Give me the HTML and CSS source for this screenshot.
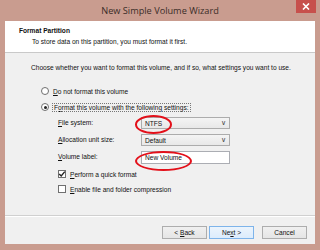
FILE: index.html
```html
<!DOCTYPE html>
<html lang="en">
<head>
    <meta charset="UTF-8">
    <title>New Simple Volume Wizard</title>
    <link rel="stylesheet" href="styles.css">
</head>
<body>

<div class="window">
    <div class="titlebar">
        <span class="title">New Simple Volume Wizard</span>
        <div class="close">
            <svg width="8" height="7" viewBox="0 0 8 7"><path d="M1 0.5 L7 6.5 M7 0.5 L1 6.5" stroke="#fff" stroke-width="1.6"/></svg>
        </div>
    </div>

    <div class="client">
        <div class="header">
            <div class="header-title">Format Partition</div>
            <div class="header-sub">To store data on this partition, you must format it first.</div>
        </div>

        <div class="content">
            <p class="intro">Choose whether you want to format this volume, and if so, what settings you want to use.</p>

            <div class="options">
                <div class="radio-row">
                    <span class="radio"></span>
                    <span><u>D</u>o not format this volume</span>
                </div>
                <div class="radio-row">
                    <span class="radio checked"></span>
                    <span class="focused">F<u>o</u>rmat this volume with the following settings:</span>
                </div>

                <div class="settings">
                    <label><u>F</u>ile system:</label>
                    <div class="combo">
                        <span>NTFS</span>
                        <span class="chevron">&#8744;</span>
                    </div>

                    <label><u>A</u>llocation unit size:</label>
                    <div class="combo">
                        <span>Default</span>
                        <span class="chevron">&#8744;</span>
                    </div>

                    <label><u>V</u>olume label:</label>
                    <div class="textbox">New Volume</div>
                </div>

                <div class="checks">
                    <div class="check-row">
                        <span class="checkbox checked">
                            <svg width="8" height="8" viewBox="0 0 8 8"><path d="M1.2 4 L3.2 6 L6.8 1.6" fill="none" stroke="#222" stroke-width="1.4"/></svg>
                        </span>
                        <span><u>P</u>erform a quick format</span>
                    </div>
                    <div class="check-row">
                        <span class="checkbox"></span>
                        <span><u>E</u>nable file and folder compression</span>
                    </div>
                </div>
            </div>
        </div>

        <div class="footer">
            <button class="btn">&lt; <u>B</u>ack</button>
            <button class="btn default">Ne<u>x</u>t &gt;</button>
            <button class="btn cancel">Cancel</button>
        </div>
    </div>

    <!-- red marks drawn over the screenshot -->
    <span class="mark mark-fs"></span>
    <span class="mark mark-label"></span>
</div>

</body>
</html>
```

FILE: styles.css
```css
/* Base body styling */
body {
    margin: 0;
    padding: 0;
    font-family: 'Liberation Sans', Arial, sans-serif;
    font-size: 6.6px;
    color: #111;
    background-color: #c99c8f;
}

/* Window frame */
.window {
    position: relative;
    width: 320px;
    height: 250px;
    box-sizing: border-box;
    padding: 0 5px 6px 5px;
    background-color: #c99c8f;
    display: flex;
    flex-direction: column;
}

.titlebar {
    height: 21px;
    display: flex;
    align-items: center;
    justify-content: center;
    position: relative;
}

.title {
    font-family: 'Open Sans', 'Noto Sans', sans-serif;
    font-size: 9.2px;
    color: #3a2c28;
    margin-top: -1px;
}

.close {
    position: absolute;
    right: -1px;
    top: 0;
    width: 20px;
    height: 13px;
    background-color: #c7504c;
    display: flex;
    align-items: center;
    justify-content: center;
}

/* Client area */
.client {
    flex: 1;
    display: flex;
    flex-direction: column;
    background-color: #f0f0f0;
}

.header {
    height: 32px;
    box-sizing: border-box;
    background-color: #fff;
    border-bottom: 1px solid #c9c9c9;
    padding: 5px 0 0 14px;
}

.header-title {
    font-weight: bold;
    line-height: 9px;
}

.header-sub {
    line-height: 9px;
    margin-top: 2px;
    padding-left: 13px;
}

.content {
    flex: 1;
    padding: 10px 0 0 26px;
}

.intro {
    margin: 0;
    line-height: 10px;
}

.options {
    margin-top: 13px;
    padding-left: 10px;
}

.radio-row, .check-row {
    display: flex;
    align-items: center;
    height: 10px;
    gap: 4px;
}

.radio-row + .radio-row {
    margin-top: 6px;
}

.radio {
    width: 6px;
    height: 6px;
    border: 1px solid #6f6f6f;
    border-radius: 50%;
    background-color: #fff;
    position: relative;
}

.radio.checked::after {
    content: "";
    position: absolute;
    left: 1.5px;
    top: 1.5px;
    width: 3px;
    height: 3px;
    border-radius: 50%;
    background-color: #222;
}

.focused {
    outline: 1px dotted #777;
    outline-offset: 0;
    padding: 0 1px;
}

/* File system / allocation / label rows */
.settings {
    display: grid;
    grid-template-columns: 83px 89px;
    grid-auto-rows: 12px;
    row-gap: 5px;
    align-items: center;
    margin-top: 5px;
    padding-left: 17px;
}

.settings label {
    line-height: 10px;
}

.combo, .textbox {
    height: 12px;
    box-sizing: border-box;
    border: 1px solid #acacac;
    display: flex;
    align-items: center;
    padding: 0 3px;
}

.combo {
    background: linear-gradient(#f4f4f4, #e8e8e8);
    justify-content: space-between;
}

.chevron {
    font-size: 7px;
    color: #444;
}

.textbox {
    background-color: #fff;
    border-color: #abadb3;
    height: 13px;
}

.checks {
    margin-top: 6px;
    padding-left: 17px;
}

.check-row + .check-row {
    margin-top: 5px;
}

.checkbox {
    width: 8px;
    height: 8px;
    box-sizing: border-box;
    border: 1px solid #707070;
    background-color: #fff;
    display: flex;
    align-items: center;
    justify-content: center;
}

.checkbox svg {
    margin: -1px;
}

/* Footer buttons */
.footer {
    border-top: 1px solid #d0d0d0;
    box-shadow: inset 0 1px 0 #fff;
    height: 29px;
    box-sizing: border-box;
    display: flex;
    justify-content: flex-end;
    align-items: flex-start;
    padding: 10px 8px 0 0;
}

.btn {
    width: 45px;
    height: 13px;
    padding: 0;
    font-family: 'Liberation Sans', Arial, sans-serif;
    font-size: 6.6px;
    color: #111;
    border: 1px solid #adadad;
    background: linear-gradient(#f0f0f0, #e5e5e5);
}

.btn.default {
    margin-left: 2px;
    border-color: #7eb4ea;
    background: linear-gradient(#ecf4fc, #dcecfc);
}

.btn.cancel {
    margin-left: 8px;
}

/* Red circles */
.mark {
    position: absolute;
    border: 2.5px solid #e3101a;
    border-radius: 50%;
    box-sizing: border-box;
}

.mark-fs {
    left: 135px;
    top: 115px;
    width: 37px;
    height: 19px;
}

.mark-label {
    left: 135px;
    top: 151px;
    width: 57px;
    height: 20px;
}
```
